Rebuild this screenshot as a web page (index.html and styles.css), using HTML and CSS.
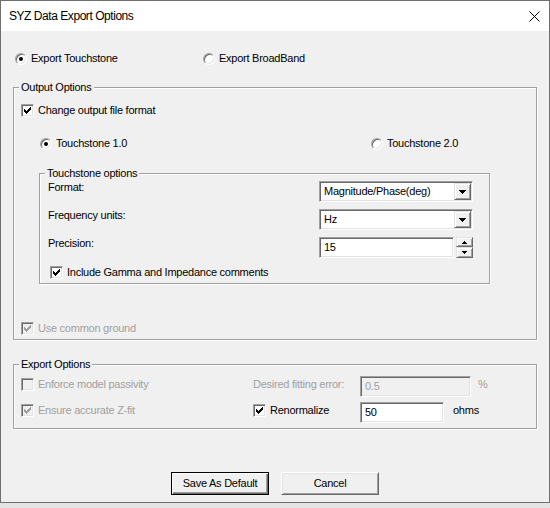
FILE: index.html
```html
<!DOCTYPE html>
<html lang="en">
<head>
  <meta charset="UTF-8">
  <title>SYZ Data Export Options</title>
  <link rel="stylesheet" href="styles.css">
</head>
<body>
  <div class="dialog">
    <!-- caption bar -->
    <div class="titlebar">
      <span class="caption">SYZ Data Export Options</span>
      <svg class="close" width="11" height="11" viewBox="0 0 11 11">
        <path d="M0.5 0.5L10.5 10.5M10.5 0.5L0.5 10.5" stroke="#000" stroke-width="1"/>
      </svg>
    </div>

    <div class="client">
      <!-- export type -->
      <div class="mode-row">
        <span class="opt mode-first"><span class="radio on"></span>Export Touchstone</span>
        <span class="opt"><span class="radio"></span>Export BroadBand</span>
      </div>

      <!-- output options -->
      <div class="group output-group">
        <div class="group-title">Output Options</div>
        <span class="opt change-row">
          <span class="check"><svg width="11" height="11" viewBox="1 1 11 11"><path d="M9 3h1v3h-1zM8 4h1v3h-1zM7 5h1v3h-1zM6 6h1v3h-1zM5 7h1v3h-1zM4 6h1v3h-1zM3 5h1v3h-1z"/></svg></span>Change output file format
        </span>

        <div class="version-row">
          <span class="opt version-first"><span class="radio on"></span>Touchstone 1.0</span>
          <span class="opt"><span class="radio"></span>Touchstone 2.0</span>
        </div>

        <div class="group ts-group">
          <div class="group-title">Touchstone options</div>
          <div class="form-row first">
            <span class="form-label">Format:</span>
            <span class="field combo">
              <span class="combo-text">Magnitude/Phase(deg)</span>
              <span class="drop"><svg width="7" height="4" viewBox="0 0 7 4"><path d="M0 0h7v1H0zM1 1h5v1H1zM2 2h3v1H2zM3 3h1v1H3z"/></svg></span>
            </span>
          </div>
          <div class="form-row">
            <span class="form-label">Frequency units:</span>
            <span class="field combo">
              <span class="combo-text">Hz</span>
              <span class="drop"><svg width="7" height="4" viewBox="0 0 7 4"><path d="M0 0h7v1H0zM1 1h5v1H1zM2 2h3v1H2zM3 3h1v1H3z"/></svg></span>
            </span>
          </div>
          <div class="form-row">
            <span class="form-label">Precision:</span>
            <span class="field precision">15</span>
            <span class="spin">
              <span class="spin-btn up"><svg width="5" height="3" viewBox="0 0 5 3"><path d="M2 0h1v1H2zM1 1h3v1H1zM0 2h5v1H0z"/></svg></span>
              <span class="spin-btn down"><svg width="5" height="3" viewBox="0 0 5 3"><path d="M0 0h5v1H0zM1 1h3v1H1zM2 2h1v1H2z"/></svg></span>
            </span>
          </div>
          <span class="opt gamma-row">
            <span class="check"><svg width="11" height="11" viewBox="1 1 11 11"><path d="M9 3h1v3h-1zM8 4h1v3h-1zM7 5h1v3h-1zM6 6h1v3h-1zM5 7h1v3h-1zM4 6h1v3h-1zM3 5h1v3h-1z"/></svg></span>Include Gamma and Impedance comments
          </span>
        </div>

        <span class="opt ground-row disabled">
          <span class="check"><svg width="11" height="11" viewBox="1 1 11 11"><path d="M9 3h1v3h-1zM8 4h1v3h-1zM7 5h1v3h-1zM6 6h1v3h-1zM5 7h1v3h-1zM4 6h1v3h-1zM3 5h1v3h-1z"/></svg></span>Use common ground
        </span>
      </div>

      <!-- export options -->
      <div class="group export-group">
        <div class="group-title">Export Options</div>
        <div class="exp-row first">
          <span class="exp-cell">
            <span class="opt disabled"><span class="check"></span>Enforce model passivity</span>
          </span>
          <span class="exp-label disabled">Desired fitting error:</span>
          <span class="field fit-error disabled">0.5</span>
          <span class="unit pct disabled">%</span>
        </div>
        <div class="exp-row">
          <span class="exp-cell">
            <span class="opt disabled"><span class="check"><svg width="11" height="11" viewBox="1 1 11 11"><path d="M9 3h1v3h-1zM8 4h1v3h-1zM7 5h1v3h-1zM6 6h1v3h-1zM5 7h1v3h-1zM4 6h1v3h-1zM3 5h1v3h-1z"/></svg></span>Ensure accurate Z-fit</span>
          </span>
          <span class="exp-label">
            <span class="opt"><span class="check"><svg width="11" height="11" viewBox="1 1 11 11"><path d="M9 3h1v3h-1zM8 4h1v3h-1zM7 5h1v3h-1zM6 6h1v3h-1zM5 7h1v3h-1zM4 6h1v3h-1zM3 5h1v3h-1z"/></svg></span>Renormalize</span>
          </span>
          <span class="field ohms-field">50</span>
          <span class="unit ohms">ohms</span>
        </div>
      </div>

      <!-- dialog buttons -->
      <div class="buttons">
        <button class="btn default">Save As Default</button>
        <button class="btn">Cancel</button>
      </div>
    </div>
  </div>
</body>
</html>
```

FILE: styles.css
```css
/* --- base: classic dialog font --- */
body {
  margin: 0;
  background: #e4e4e4;
  font-family: "Liberation Sans", Arial, sans-serif;
  font-size: 11px;
  line-height: 13px;
  letter-spacing: -0.25px;
  color: #000;
}
.dialog {
  width: 550px;
  height: 503px;
  box-sizing: border-box;
  border: 1px solid #6f6f6f;
  background: #f0f0f0;
}
/* --- caption bar --- */
.titlebar {
  height: 30px;
  display: flex;
  align-items: center;
  background: #fff;
  padding-left: 8px;
}
.caption {
  font-size: 12px;
  letter-spacing: -0.45px;
}
.close {
  display: block;
  margin-left: auto;
  margin-right: 9px;
}
.client {
  padding-top: 21px;
}
/* --- radios and checkboxes --- */
.opt {
  display: flex;
  align-items: center;
  gap: 4px;
  height: 13px;
  white-space: nowrap;
}
.radio {
  width: 12px;
  height: 12px;
  flex: none;
  box-sizing: border-box;
  border-radius: 50%;
  border: 1px solid;
  border-color: #a0a0a0 #fff #fff #a0a0a0;
  box-shadow: inset 1px 1px #696969, inset -1px -1px #e3e3e3;
  background: #fff;
  display: flex;
  align-items: center;
  justify-content: center;
}
.radio.on::after {
  content: "";
  width: 4px;
  height: 4px;
  border-radius: 50%;
  background: #000;
}
.check {
  width: 13px;
  height: 13px;
  flex: none;
  box-sizing: border-box;
  border: 1px solid;
  border-color: #a0a0a0 #fff #fff #a0a0a0;
  box-shadow: inset 1px 1px #696969, inset -1px -1px #e3e3e3;
  background: #fff;
  color: #000;
}
.check svg {
  display: block;
  fill: currentColor;
}
.disabled {
  color: #a0a0a0;
}
.disabled .check {
  background: #f0f0f0;
  color: #a0a0a0;
}
/* --- top radio row --- */
.mode-row {
  display: flex;
  padding-left: 14px;
}
.mode-first {
  width: 188px;
}
/* --- etched group boxes --- */
.group {
  box-sizing: border-box;
  border: 1px solid #a0a0a0;
  box-shadow: inset 1px 1px #fff, 1px 1px #fff;
}
.group-title {
  display: table;
  margin: -7px 0 0 5px;
  padding: 0 2px;
  background: #f0f0f0;
}
.output-group {
  width: 524px;
  margin: 22px 0 0 12px;
  padding-bottom: 4px;
}
.change-row {
  margin: 10px 0 0 7px;
}
.version-row {
  display: flex;
  margin: 20px 0 0 26px;
}
.version-first {
  width: 331px;
}
.ts-group {
  width: 451px;
  margin: 23px 0 0 25px;
  padding-bottom: 4px;
}
.form-row {
  display: flex;
  align-items: flex-start;
  padding-left: 8px;
  margin-top: 7px;
}
.form-row.first {
  margin-top: 1px;
}
.form-label {
  width: 271px;
}
.gamma-row {
  margin: 8px 0 0 10px;
}
.ground-row {
  margin: 38px 0 0 7px;
}
/* --- sunken edit fields --- */
.field {
  box-sizing: border-box;
  height: 21px;
  display: flex;
  align-items: center;
  border: 1px solid;
  border-color: #a0a0a0 #fff #fff #a0a0a0;
  box-shadow: inset 1px 1px #696969, inset -1px -1px #e3e3e3;
  background: #fff;
  padding-left: 4px;
}
.field.disabled {
  background: #f0f0f0;
}
.combo {
  width: 154px;
  padding: 1px 1px 1px 4px;
}
.drop {
  margin-left: auto;
  width: 17px;
  height: 17px;
}
/* raised 3d buttons inside controls */
.drop, .spin-btn {
  box-sizing: border-box;
  display: flex;
  align-items: center;
  justify-content: center;
  border: 1px solid;
  border-color: #e3e3e3 #696969 #696969 #e3e3e3;
  box-shadow: inset 1px 1px #fff, inset -1px -1px #a0a0a0;
  background: #f0f0f0;
}
.drop svg, .spin-btn svg {
  display: block;
  fill: #000;
}
.precision {
  width: 135px;
}
.spin {
  display: flex;
  flex-direction: column;
  margin-left: 2px;
}
.spin-btn {
  width: 17px;
}
.spin-btn.up {
  height: 10px;
}
.spin-btn.down {
  height: 11px;
}
/* --- export options --- */
.export-group {
  width: 524px;
  margin: 24px 0 0 12px;
  padding-bottom: 5px;
}
.exp-row {
  display: flex;
  align-items: flex-start;
  padding-left: 7px;
  margin-top: 5px;
}
.exp-cell {
  width: 232px;
  margin-top: 2px;
}
.exp-label {
  width: 107px;
  margin-top: 2px;
}
.fit-error {
  width: 111px;
}
.ohms-field {
  width: 84px;
}
.unit {
  margin-top: 2px;
}
.pct {
  margin-left: 7px;
}
.ohms {
  margin-left: 9px;
}
/* --- dialog buttons --- */
.buttons {
  display: flex;
  justify-content: center;
  gap: 12px;
  margin-top: 43px;
  padding-right: 0;
}
.btn {
  width: 98px;
  height: 23px;
  padding: 0;
  font: inherit;
  letter-spacing: inherit;
  color: #000;
  background: #f0f0f0;
  border: 1px solid;
  border-color: #fff #696969 #696969 #fff;
  box-shadow: inset 1px 1px #e3e3e3, inset -1px -1px #a0a0a0;
}
.btn.default {
  border-color: #000;
  box-shadow: inset 1px 1px #fff, inset -1px -1px #696969, inset -2px -2px #a0a0a0;
}
```
